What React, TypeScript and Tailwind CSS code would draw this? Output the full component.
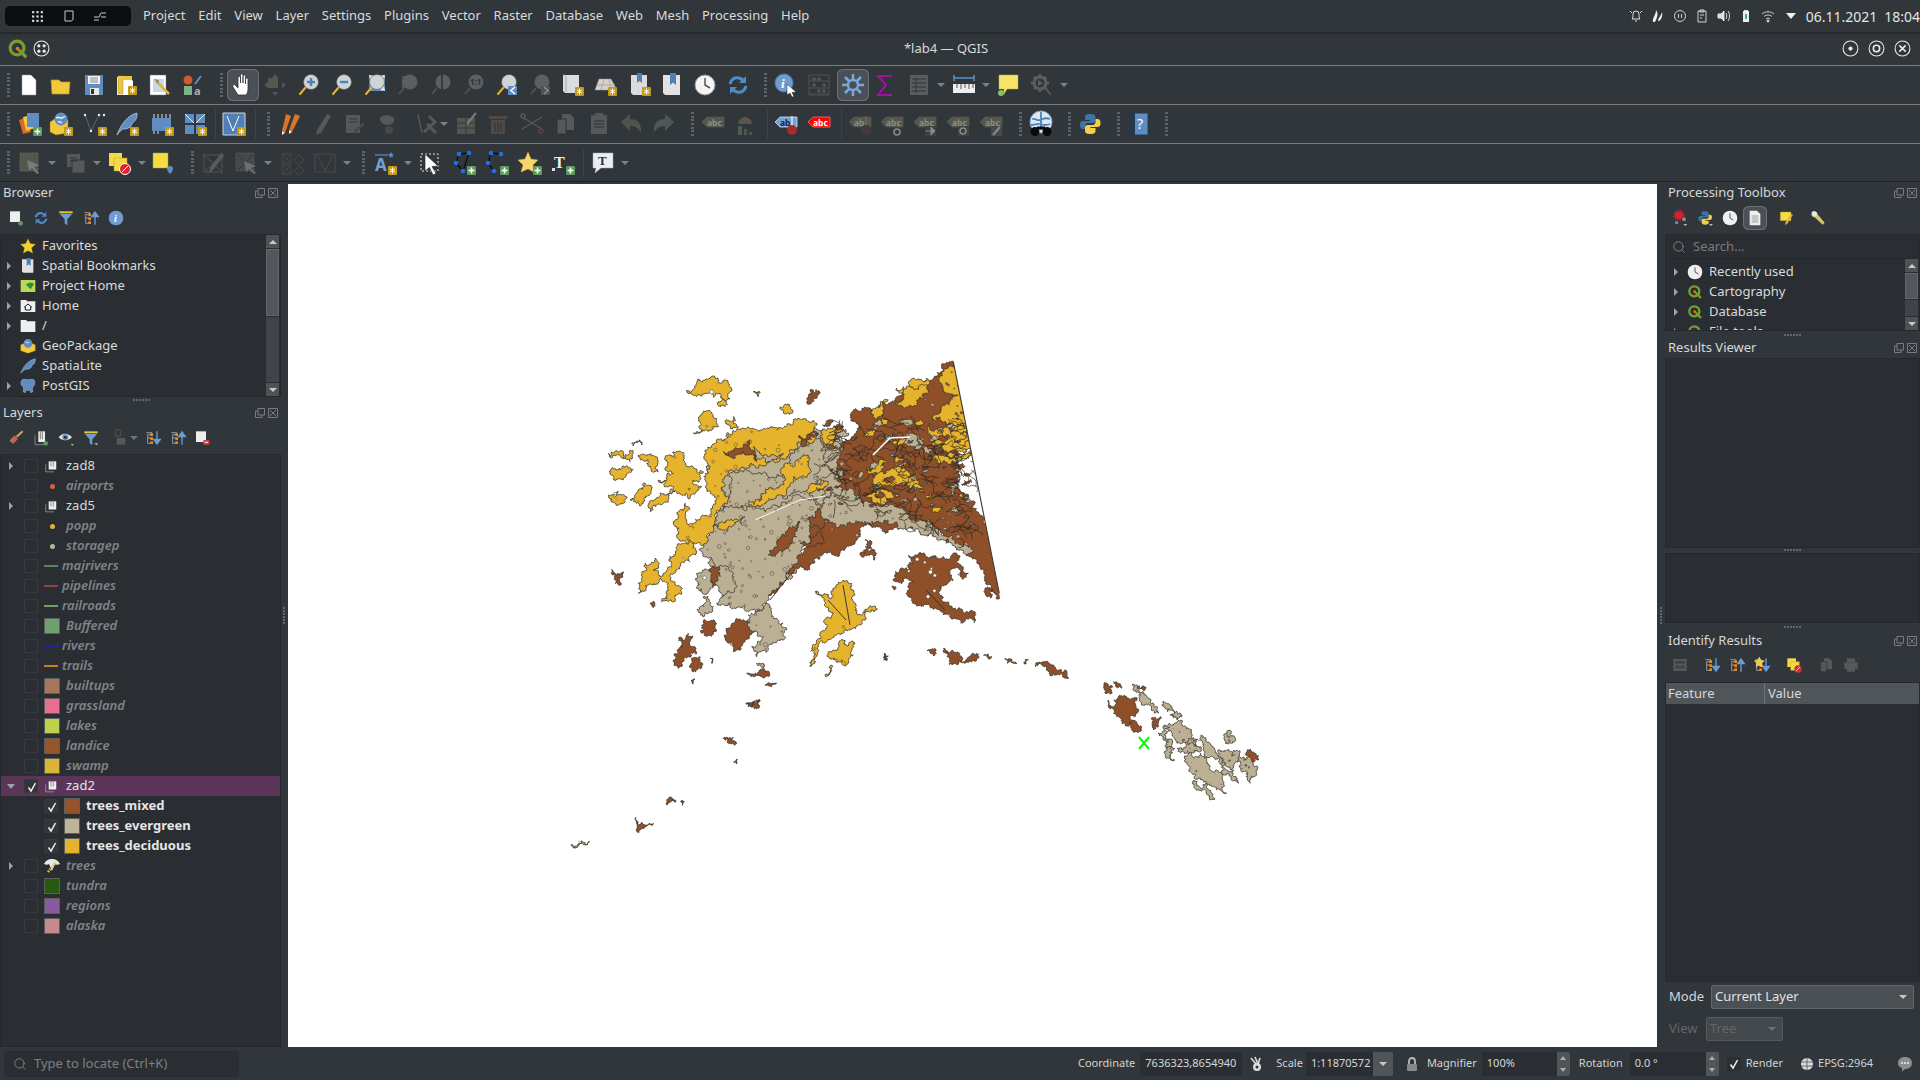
import type { ReactNode } from "react";
import { Search } from "lucide-react";

// ---- map drawing -------------------------------------------------------
type Pt = [number, number];
const BROWN = "#8f5029";
const TAN = "#bcb094";
const YEL = "#e6b32d";
const EDGE = "#3a362e";

let seed = 1234567;
const rnd = () => {
  seed = (seed + 0x6d2b79f5) | 0;
  let t = Math.imul(seed ^ (seed >>> 15), 1 | seed);
  t = (t + Math.imul(t ^ (t >>> 7), 61 | t)) ^ t;
  return ((t ^ (t >>> 14)) >>> 0) / 4294967296;
};

const z9 = (s: string): Pt[] =>
  s.split(" ").map((p) => {
    const [x, y] = p.split(",").map(Number);
    return [580 + x / 3, 340 + y / 3] as Pt;
  });
const z10 = (s: string): Pt[] =>
  s.split(" ").map((p) => {
    const [x, y] = p.split(",").map(Number);
    return [540 + x / 2.119, 620 + y / 3] as Pt;
  });

// jagged coast: split every edge until it is about a pixel and a half long
const splitEdge = (a: Pt, b: Pt, out: Pt[]) => {
  const dx = b[0] - a[0];
  const dy = b[1] - a[1];
  const len = Math.hypot(dx, dy);
  if (len < 1.6) {
    out.push(a);
    return;
  }
  const k = (rnd() - 0.5) * (len > 14 ? 0.26 : 0.85);
  const m: Pt = [(a[0] + b[0]) / 2 - dy * k, (a[1] + b[1]) / 2 + dx * k];
  splitEdge(a, m, out);
  splitEdge(m, b, out);
};
const rough = (pts: Pt[]) => {
  const out: Pt[] = [];
  pts.forEach((a, i) => splitEdge(a, pts[(i + 1) % pts.length], out));
  return out;
};
const toD = (pts: Pt[]) =>
  "M" + pts.map((p) => p[0].toFixed(1) + " " + p[1].toFixed(1)).join("L") + "Z";

const inside = (p: Pt, poly: Pt[]) => {
  let hit = false;
  for (let i = 0, j = poly.length - 1; i < poly.length; j = i++) {
    const [xi, yi] = poly[i];
    const [xj, yj] = poly[j];
    if (yi > p[1] !== yj > p[1] && p[0] < ((xj - xi) * (p[1] - yi)) / (yj - yi) + xi) hit = !hit;
  }
  return hit;
};

type Land = { c: string; p: Pt[]; holes?: number; hc?: string };
const mainland: Land[] = [
  { c: TAN, p: z9("385,400 430,300 700,260 810,320 810,500 700,560 640,700 520,800 420,780 370,625 430,500") },
  { c: BROWN, holes: 170, hc: TAN, p: z9("1120,65 1150,60 1320,800 1262,775 1235,740 1200,670 1150,620 1090,590 1040,570 960,565 900,560 860,555 830,600 780,640 740,640 700,670 640,700 600,740 560,775 560,720 620,700 680,620 700,540 740,500 720,470 690,410 690,370 730,340 790,330 810,300 835,250 810,225 860,205 890,210 950,170 1000,130 1060,115") },
  { c: BROWN, holes: 26, hc: "#ffffff", p: z9("985,645 1040,650 1090,650 1125,640 1150,680 1165,700 1145,710 1110,690 1120,720 1080,740 1090,790 1130,810 1185,820 1182,848 1130,838 1090,825 1050,800 1000,790 985,770 1000,725 970,725 940,722 945,695 985,695 1000,670") },
  { c: TAN, holes: 90, hc: TAN, p: z9("420,520 450,400 500,390 560,400 620,420 640,340 700,290 740,310 790,320 770,400 790,470 730,490 640,460 500,500") },
  { c: TAN, holes: 60, hc: TAN, p: z9("730,480 800,450 850,490 950,500 1000,540 1100,590 1180,630 1170,640 1090,600 1000,570 930,555 850,550 800,560 760,550 700,540") },
  { c: TAN, holes: 150, hc: TAN, p: z9("360,625 390,570 430,510 500,510 640,465 690,480 725,500 690,560 685,610 630,690 600,725 565,770 545,810 505,815 450,790 410,790 470,740 430,680 370,650") },
  { c: BROWN, p: z9("590,610 640,560 660,545 650,590 610,630 565,645") },
  { c: BROWN, p: z9("690,530 720,510 745,540 720,570 690,560") },
  { c: BROWN, p: z9("660,610 690,590 730,595 680,620") },
  { c: YEL, holes: 90, hc: YEL, p: z9("375,330 410,300 440,280 500,265 560,265 640,245 700,240 700,270 690,310 650,310 620,350 560,370 500,385 450,390 430,440 445,480 420,510 400,560 350,610 290,590 295,530 315,490 320,540 340,550 385,530 410,480 380,450 385,400") },
  { c: YEL, holes: 12, hc: YEL, p: z9("505,490 600,440 625,370 690,355 690,400 640,410 620,460 540,500") },
  { c: YEL, p: z9("400,560 440,540 495,530 440,575") },
  { c: YEL, p: z9("680,450 730,420 745,430 700,455") },
  { c: TAN, p: z9("520,320 560,345 610,340 590,360 530,365") },
  { c: BROWN, p: z9("430,335 480,325 510,300 530,360 500,345 460,355") },
  { c: BROWN, p: z9("655,290 680,285 695,300 670,320") },
  { c: YEL, holes: 4, hc: "#fff", p: z9("320,150 375,120 405,110 450,140 450,175 420,160 380,160 340,165") },
  { c: YEL, p: z9("415,185 440,185 435,200 420,200") },
  { c: YEL, holes: 4, hc: YEL, p: z9("340,280 375,215 410,235 415,260 380,270") },
  { c: YEL, p: z9("435,245 460,230 475,260 450,265") },
  { c: YEL, p: z9("600,200 630,200 635,220 610,215") },
  { c: YEL, p: z9("520,155 540,155 535,170") },
  { c: BROWN, p: z9("680,185 690,150 715,165 700,185") },
  { c: YEL, p: z9("85,340 140,345 150,330 160,340 150,365 130,345 90,350") },
  { c: YEL, p: z9("155,310 180,300 185,315 160,318") },
  { c: YEL, p: z9("175,345 225,350 235,395 215,395 205,360 180,355") },
  { c: YEL, p: z9("90,400 160,390 130,420 100,415") },
  { c: YEL, holes: 6, hc: YEL, p: z9("255,360 295,335 310,360 320,380 370,395 340,420 365,440 330,475 300,460 260,440 235,420 280,400 255,385") },
  { c: YEL, holes: 5, hc: "#fff", p: z9("150,480 190,430 215,440 190,490") },
  { c: YEL, holes: 4, hc: "#fff", p: z9("85,465 115,455 140,475 105,490") },
  { c: YEL, p: z9("205,500 240,460 285,455 250,490 210,515") },
  { c: YEL, holes: 8, hc: "#fff", p: z9("175,730 195,670 225,655 220,690 245,710 275,680 290,620 330,600 350,640 300,680 270,720 300,740 280,785 245,785 265,730 240,715 190,755 175,760") },
  { c: BROWN, p: z9("95,688 130,695 120,735 105,730") },
  { c: BROWN, p: z9("210,790 225,790 222,800") },
  { c: TAN, holes: 5, hc: "#fff", p: z9("350,700 390,685 420,700 390,745 350,745") },
  { c: BROWN, p: z9("385,690 420,690 400,740") },
  { c: TAN, p: z9("360,800 370,770 400,800 370,830") },
  { c: BROWN, holes: 6, hc: TAN, p: z9("440,880 470,835 510,850 525,870 490,910 460,935 445,910") },
  { c: TAN, holes: 16, hc: TAN, p: z9("505,825 560,790 590,835 620,870 610,900 565,925 530,950 515,920 550,890 510,870") },
  { c: BROWN, p: z9("280,960 300,890 325,880 345,920 325,950 295,985") },
  { c: BROWN, p: z9("335,960 360,950 355,985 335,990") },
  { c: BROWN, p: z9("365,855 405,845 410,870 380,890") },
  { c: BROWN, p: z9("500,1000 550,990 565,1010 520,1010") },
  { c: BROWN, p: z9("555,1035 590,1030 575,1040") },
  { c: BROWN, p: z9("500,1090 540,1080 520,1100") },
  { c: BROWN, p: z9("335,1020 345,1018 340,1032") },
  { c: BROWN, p: z9("390,955 398,955 395,970") },
  { c: TAN, p: z9("530,970 555,975 550,990") },
  { c: YEL, holes: 12, hc: YEL, p: z9("705,755 760,770 790,720 815,730 825,810 890,810 830,860 790,880 740,905 715,935 690,980 710,900 720,880 735,850 745,810") },
  { c: YEL, holes: 16, hc: YEL, p: z9("750,935 790,900 825,910 800,975 765,960") },
  { c: YEL, p: z9("735,1005 755,975 750,995 740,1010") },
  { c: BROWN, p: z9("915,940 920,960 912,955") },
  { c: BROWN, p: z9("840,640 860,625 890,640 885,660 865,645 845,650") },
  { c: BROWN, p: z9("855,600 870,600 875,625 855,620") },
  { c: BROWN, p: z9("1215,745 1240,750 1235,772 1220,770") },
  { c: BROWN, p: z9("935,740 945,740 942,750") },
  { c: YEL, p: z9("950,145 970,140 965,160") },
  { c: YEL, holes: 6, hc: BROWN, p: z9("945,190 1000,140 1040,120 1050,160 1010,190 970,205") },
  { c: YEL, holes: 24, hc: BROWN, p: z9("1070,110 1120,80 1160,80 1200,260 1130,260 1060,240 1100,190 1135,165 1090,150") },
  { c: YEL, holes: 8, hc: BROWN, p: z9("1050,250 1130,260 1180,260 1190,340 1120,350 1060,320") },
  { c: YEL, p: z9("880,205 925,180 900,230 880,235") },
  { c: YEL, holes: 6, hc: YEL, p: z9("885,410 930,390 990,400 1030,440 1030,460 980,430 885,435") },
  { c: YEL, p: z9("860,390 920,365 880,410") },
  { c: YEL, p: z9("1060,340 1100,350 1190,330 1130,370 1080,370") },
  { c: YEL, p: z9("860,470 920,450 960,470 880,490") },
  { c: YEL, p: z9("985,130 1040,115 1050,130 1000,145") },
  { c: YEL, p: z9("760,260 790,270 760,310 730,310 720,290") },
  { c: YEL, p: z9("1110,280 1160,270 1185,300 1120,310") },
  { c: TAN, p: z9("920,300 1000,280 1030,330 960,320") },
  { c: TAN, p: z9("1010,300 1060,330 1050,350") },
  { c: TAN, p: z9("1100,430 1130,430 1120,470") },
];

// small mixed patches in the busy north eastern part
for (let i = 0; i < 150; i++) {
  const x = 700 + rnd() * 480;
  const y = 240 + rnd() * 340;
  if (y > 480 + (x - 700) * 0.25 || x > 1110 + (y - 65) * 0.19) continue;
  const north = x > 1000 && y < 380;
  const v = rnd();
  const c = north
    ? v < 0.3 ? YEL : v < 0.65 ? BROWN : v < 0.9 ? TAN : "#ffffff"
    : v < 0.45 ? BROWN : v < 0.75 ? TAN : v < 0.9 ? YEL : "#ffffff";
  const r = c === "#ffffff" ? 3 + rnd() * 5 : 5 + rnd() * 15;
  const a = -0.5 + rnd() * 0.6;
  const ca = Math.cos(a);
  const sa = Math.sin(a);
  const w = r * 0.45;
  const pts = [[-r, 0], [-r * 0.2, -w], [r, -w * 0.3], [r * 0.3, w], [-r * 0.5, w * 0.8]];
  mainland.push({
    c,
    p: pts.map(([px, py]) => [580 + (x + px * ca - py * sa) / 3, 340 + (y + px * sa + py * ca) / 3] as Pt),
  });
}

const islands: Land[] = [
  ...["1195,200 1210,195 1213,218 1200,222", "1205,240 1215,260 1210,265", "1215,280 1225,230 1255,235 1265,280 1250,290 1275,320 1270,335 1250,305 1225,290", "1295,295 1315,290 1310,315 1300,330", "1215,185 1225,190 1232,205 1220,200", "1265,198 1280,198 1282,210 1270,208", "820,92 840,100 835,108", "855,85 865,95 858,98", "862,110 885,95 890,125 905,115 925,100 930,110 900,130 885,135", "940,106 958,110 950,116", "985,115 1000,120 1010,132 990,130", "1025,128 1035,120 1030,132", "1050,140 1065,125 1100,150 1120,175 1095,165", "388,355 400,355 415,365 412,375 400,370", "410,425 418,418 416,432", "270,555 278,532 288,545 275,548", "298,545 306,545 302,556", "203,592 208,615 240,610 210,637 205,625", "436,250 465,238 450,260", "730,100 735,122 728,120"].map((s) => ({ c: BROWN, p: z10(s) })),
  ...["1255,195 1270,215 1290,235 1310,280 1295,270 1270,240", "1320,245 1335,255 1345,280 1330,275", "1335,285 1360,285 1350,300", "1320,320 1350,305 1380,340 1385,370 1350,370 1340,340", "1310,340 1330,335 1340,370 1325,380", "1350,385 1390,375 1400,395 1370,400", "1372,405 1400,400 1420,440 1445,470 1455,520 1430,500 1400,480 1375,450", "1385,480 1410,490 1430,535 1395,510", "1375,355 1395,360 1390,380 1375,375", "1400,345 1420,370 1435,400 1455,450 1475,470 1480,490 1450,465 1425,410 1405,380", "1440,390 1470,390 1480,420 1465,450 1445,430", "1482,410 1510,405 1520,450 1505,490 1485,450", "1455,335 1465,335 1465,370 1452,370", "1330,380 1345,385 1345,420 1335,415", "67,672 88,662 105,665 100,675 80,675 72,685"].map((s) => ({ c: TAN, holes: 10, hc: "#6a6452", p: z10(s) })),
  { c: BROWN, p: z10("1505,388 1522,420 1512,425") },
];

const landPaths = (list: Land[]) =>
  list.map((l) => {
    const d = toD(rough(l.p));
    const xs = l.p.map((p) => p[0]);
    const ys = l.p.map((p) => p[1]);
    const holes: { x: number; y: number; r: number }[] = [];
    for (let i = 0; i < (l.holes ?? 0); i++) {
      const pt: Pt = [
        Math.min(...xs) + rnd() * (Math.max(...xs) - Math.min(...xs)),
        Math.min(...ys) + rnd() * (Math.max(...ys) - Math.min(...ys)),
      ];
      if (inside(pt, l.p)) holes.push({ x: pt[0], y: pt[1], r: 0.5 + rnd() * rnd() * 1.8 });
    }
    return { d, c: l.c, hc: l.hc, holes };
  });

const mainPaths = landPaths(mainland);
const islandPaths = landPaths(islands);

// dark stream network over the north east of the mainland
const streams: string[] = [];
for (let i = 0; i < 190; i++) {
  let x = 700 + rnd() * 480;
  let y = 230 + rnd() * 370;
  if (y > 470 + (x - 700) * 0.3 || x > 1120 + (y - 65) * 0.19) continue;
  let a = 0.1 + rnd() * 0.5;
  let d = `M${(580 + x / 3).toFixed(1)} ${(340 + y / 3).toFixed(1)}`;
  for (let k = 0; k < 8; k++) {
    a += (rnd() - 0.5) * 1.5;
    x += Math.cos(a) * 7;
    y += Math.sin(a) * 7;
    d += `L${(580 + x / 3).toFixed(1)} ${(340 + y / 3).toFixed(1)}`;
  }
  streams.push(d);
}

const MapDrawing = () => (
  <svg viewBox="288 184 1369 863" className="block h-full w-full">
    <defs>
      <clipPath id="wedge">
        <polygon points="288,184 918,184 1089,1047 288,1047" />
      </clipPath>
    </defs>
    <g clipPath="url(#wedge)" strokeLinejoin="round">
      {mainPaths.map((m, i) => (
        <g key={i}>
          <path d={m.d} fill={m.c} stroke={EDGE} strokeWidth="0.8" />
          {m.holes.map((h, j) => (
            <circle key={j} cx={h.x} cy={h.y} r={h.r} fill={m.hc} stroke="#4d493e" strokeWidth="0.5" />
          ))}
        </g>
      ))}
      {streams.map((d, i) => (
        <path key={i} d={d} fill="none" stroke="#2e2a24" strokeWidth="0.7" />
      ))}
      <path d="M873 455L890 438L910 437" fill="none" stroke="#fff" strokeWidth="1.6" />
      <path d="M755 520L800 500L826 496" fill="none" stroke="#fff" strokeWidth="0.9" />
      <path d="M843 585L850 625M828 600L846 620" fill="none" stroke="#2e2a24" strokeWidth="0.9" />
      <path d="M926 590L945 610M790 575L770 600" fill="none" stroke="#2e2a24" strokeWidth="0.9" />
    </g>
    <path d="M953.300 361.700L999.300 593.300" fill="none" stroke={EDGE} strokeWidth="1.100" />
    <g strokeLinejoin="round">
      {islandPaths.map((m, i) => (
        <g key={i}>
          <path d={m.d} fill={m.c} stroke={EDGE} strokeWidth="0.8" />
          {m.holes.map((h, j) => (
            <circle key={j} cx={h.x} cy={h.y} r={h.r * 0.7} fill={m.hc} />
          ))}
        </g>
      ))}
    </g>
    <path d="M1139 737L1149 749M1149 737L1139 749" stroke="#00ff00" strokeWidth="2" />
  </svg>
);

// ---- icons -------------------------------------------------------------
const Gold = ({ x = 15, y = 15 }: { x?: number; y?: number }) => (
  <g>
    <rect x={x} y={y} width="9" height="9" rx="1" fill="#c59a12" />
    <path d={`M${x + 4.5} ${y + 1.5}v6M${x + 2} ${y + 3}l5 3M${x + 7} ${y + 3}l-5 3`} stroke="#fff" strokeWidth="1" />
  </g>
);
const Plus = ({ x = 15, y = 15 }: { x?: number; y?: number }) => (
  <g>
    <rect x={x} y={y} width="9" height="9" rx="1" fill="#5d9a5d" />
    <path d={`M${x + 4.5} ${y + 1.5}v6M${x + 1.5} ${y + 4.5}h6`} stroke="#fff" strokeWidth="1.6" />
  </g>
);
const Mag = ({ f = "#cfd3d6", h = "#e8b52d", children }: { f?: string; h?: string; children?: ReactNode }) => (
  <g>
    <path d="M9 14L3 21" stroke={h} strokeWidth="2" strokeLinecap="round" />
    <circle cx="14" cy="9" r="7.5" fill={f} stroke="#555" strokeWidth=".6" />
    {children}
  </g>
);
const DMag = ({ children }: { children?: ReactNode }) => (
  <g>
    <path d="M8 15L3 21" stroke="#4b4f52" strokeWidth="2" />
    <circle cx="14" cy="9" r="7.5" fill="#5b5f5f" />
    {children}
  </g>
);
const Page = ({ f = "#fff" }: { f?: string }) => <path d="M5 2h9l5 5v15H5z" fill={f} stroke="#9a9a9a" strokeWidth=".5" />;
const Tag = ({ f = "#55574f", t = "abc", c = "#8c8c80", s = "#55574f" }: { f?: string; t?: string; c?: string; s?: string }) => (
  <g>
    <path d="M1 10l5-5h17v10H6z" fill={f} stroke={s} strokeWidth=".8" />
    <text x="6" y="13.5" fontSize="8.5" fontWeight="700" fontFamily="Noto Sans" fill={c}>{t}</text>
  </g>
);
const Expand = ({ up }: { up?: boolean }) => (
  <g>
    <path d="M2 4h8v3h-6v13h6M4 12h6" fill="none" stroke="#c8c8c8" strokeWidth="1" />
    <rect x="8" y="5" width="4" height="4" fill="#ee8a1c" />
    <rect x="8" y="11" width="4" height="4" fill="#ee8a1c" />
    <rect x="8" y="17" width="4" height="4" fill="#ee8a1c" />
    <path d={up ? "M18 22V6M13 10l5-7 5 7z" : "M18 2v16M13 14l5 7 5-7z"} fill="#6d9bd1" stroke="#6d9bd1" strokeWidth="2" />
  </g>
);
const Python = (
  <g>
    <path d="M12 2c-5 0-5 2-5 3.5V8h5v1H5c-2 0-3 1.500-3 4s1 4 3 4h2v-3c0-1.500 1-3 3-3h5c1.500 0 2.500-1 2.500-2.500v-3C17.500 3 16 2 12 2z" fill="#3d74a8" />
    <path d="M12.500 22c5 0 5-2 5-3.500V16h-5v-1h7c2 0 3-1.500 3-4s-1-4-3-4h-2v3c0 1.500-1 3-3 3h-5C8 13 7 14 7 15.500v3C7 21 8.500 22 12.500 22z" fill="#f5cf48" />
  </g>
);
const QLogo = (
  <g>
    <circle cx="11" cy="11" r="7.5" fill="none" stroke="#75a02c" strokeWidth="3.5" />
    <path d="M13 13l8 8" stroke="#75a02c" strokeWidth="3.5" />
    <circle cx="11.500" cy="11.500" r="2" fill="#ee7913" />
  </g>
);
const DisBox = (
  <g fill="none" stroke="#45494c" strokeWidth="1.4">
    <path d="M3 4h18v17H3zM3 4l18 17M21 4L3 21" />
    <circle cx="3" cy="4" r="1" /><circle cx="21" cy="4" r="1" />
  </g>
);

const ic: Record<string, ReactNode> = {
  new: <Page />,
  open: <path d="M2 7h8l2 2h9l-1 12H3z" fill="#f0c93c" stroke="#b8952b" strokeWidth=".7" />,
  save: (
    <g>
      <path d="M3 2h18v20H3z" fill="#5f8dc1" />
      <path d="M6 3h12v8H6z" fill="#f4f4f4" />
      <path d="M8 5h8M8 7h8M8 9h8" stroke="#8a8a8a" />
      <path d="M8 15h9v7H8z" fill="#e8e8e8" />
      <path d="M9 16h3v5H9z" fill="#333" />
    </g>
  ),
  layout: (
    <g>
      <path d="M2 4h12l4 4v14H2z" fill="#fff" />
      <path d="M3 3h5v18H3z" fill="#e8c645" stroke="#a8902a" strokeWidth=".5" />
      <path d="M3 3h14v4H3z" fill="#e8c645" />
      <Gold x={13} y={13} />
    </g>
  ),
  layoutMgr: (
    <g>
      <path d="M2 2h16v20H2z" fill="#fff" stroke="#777" strokeWidth=".5" />
      <path d="M5 6h11v13H5z" fill="#c9d8ea" />
      <path d="M8 8l13 13" stroke="#d9b43e" strokeWidth="2.500" />
      <path d="M6 6l5 1-1 4z" fill="#888" />
    </g>
  ),
  style: (
    <g>
      <circle cx="7" cy="7" r="4.500" fill="#d05a30" />
      <path d="M14 11l6-8" stroke="#5d93cb" strokeWidth="1.800" />
      <rect x="3" y="13" width="8" height="9" fill="#7eb38a" />
      <text x="13" y="22" fontSize="11" fontWeight="700" fontFamily="Noto Sans" fill="#b0b0b0">a</text>
    </g>
  ),
  hand: (
    <g fill="#fff" stroke="#333" strokeWidth=".8" strokeLinejoin="round">
      <path d="M7 22l-5-8c-1-2 1-3 2-2l3 3V5c0-2 2.500-2 2.500 0v5V2.500c0-2 2.500-2 2.500 0V10V3.500c0-2 2.500-2 2.500 0V11V6.500c0-2 2.500-2 2.500 0V16c0 3-1 5-2 6H9z" />
    </g>
  ),
  panSel: (
    <g fill="#55584f">
      <path d="M5 5h10v10H5z" />
      <path d="M12 1l3 4H9zM12 23l3-4H9zM1 12l4-3v6zM23 12l-4-3v6z" fill="#53575a" />
    </g>
  ),
  zoomIn: <Mag><path d="M10 9h8M14 5v8" stroke="#4b83bd" strokeWidth="2.400" /></Mag>,
  zoomOut: <Mag><path d="M10 9h8" stroke="#4b83bd" strokeWidth="2.400" /></Mag>,
  fullExt: (
    <g>
      <path d="M6 2h16v16H6z" fill="#5f8dc1" />
      <path d="M6 2l5 1-4 4zM22 2l-5 1 4 4zM22 18l-5-1 4-4z" fill="#dfe8f1" />
      <Mag />
    </g>
  ),
  zoomSel: <g><path d="M6 3h12v12H6z" fill="#53555a" /><DMag /></g>,
  zoomLayer: <g><DMag /><path d="M13 1v16" stroke="#2e3236" strokeWidth="1.500" /></g>,
  zoomNat: <g><DMag /><text x="8" y="12" fontSize="8" fontWeight="700" fontFamily="Noto Sans" fill="#2e3236">1:1</text></g>,
  zoomLast: <g><Mag /><path d="M13 13h9v9h-9z" fill="#5f8dc1" /><path d="M20 14l-4 3.500 4 3.500" stroke="#fff" fill="none" strokeWidth="1.500" /></g>,
  zoomNext: <g><DMag /><path d="M13 13h9v9h-9z" fill="#4f5356" /><path d="M16 14l4 3.500-4 3.500" stroke="#8b8f92" fill="none" strokeWidth="1.500" /></g>,
  mapView: <g><path d="M2 2h16v18H4l-2-2z" fill="#dcdcdc" /><path d="M2 2c2 0 3 1 3 3v14" stroke="#aaa" fill="none" /><Gold x={14} y={14} /></g>,
  map3d: <g><path d="M5 6h12l6 11H1z" fill="#d5d3cc" stroke="#999" strokeWidth=".5" /><path d="M3 12h18M10 6l-3 11M15 6l2 11" stroke="#aaa" /><Gold x={14} y={14} /></g>,
  bmNew: <g><path d="M3 2h16v20H5l-2-2z" fill="#dcdcdc" /><path d="M9 0h5v10l-2.500-2-2.500 2z" fill="#4f7fb3" /><Gold x={14} y={14} /></g>,
  bookmarks: <g><path d="M3 2h17v20H5l-2-2z" fill="#e2e2e2" /><path d="M10 0h6v12l-3-2.500-3 2.500z" fill="#4f7fb3" /></g>,
  clock: <g><circle cx="12" cy="12" r="10" fill="#f4f4f4" stroke="#999" /><path d="M12 5v7l5 3" stroke="#555" strokeWidth="1.500" fill="none" /></g>,
  refresh: (
    <g fill="none" stroke="#4c8cc9" strokeWidth="3.200">
      <path d="M4 11c1-5 5-7 9-6 2 .5 3.500 1.500 4.500 3" />
      <path d="M20 13c-1 5-5 7-9 6-2-.5-3.500-1.500-4.500-3" />
      <path d="M20 3v7h-7zM4 21v-7h7z" fill="#4c8cc9" stroke="none" />
    </g>
  ),
  identify: (
    <g>
      <circle cx="10" cy="10" r="9" fill="#6f9dd0" stroke="#4f7aa9" />
      <text x="7" y="15" fontSize="13" fontWeight="700" fontStyle="italic" fontFamily="Liberation Serif" fill="#fff">i</text>
      <path d="M13 11l9 8-4 .5 2 4-2 .5-2-4-3 2z" fill="#fff" stroke="#222" strokeWidth=".5" />
    </g>
  ),
  attr: (
    <g stroke="#4f5356" fill="#4f5356">
      <path d="M2 2h20v20H2z" fill="none" />
      <path d="M2 8h20M2 15h20M2 21h20" fill="none" />
      <circle cx="7" cy="6" r="1.500" /><circle cx="12" cy="6" r="1.500" /><circle cx="17" cy="12" r="1.500" /><circle cx="7" cy="12" r="1.500" /><circle cx="12" cy="18" r="1.500" /><circle cx="17" cy="18" r="1.500" />
    </g>
  ),
  gear: (
    <g stroke="#79a8dc" fill="none">
      <circle cx="12" cy="12" r="5" strokeWidth="2.400" />
      <path d="M12 1v6M12 17v6M1 12h6M17 12h6M4 4l4 4M16 16l4 4M20 4l-4 4M8 16l-4 4" strokeWidth="2.600" />
    </g>
  ),
  sigma: <path d="M19 3H5l8 9-8 10h14" fill="none" stroke="#a5119f" strokeWidth="2" />,
  table: <g><path d="M3 2h18v20H3z" fill="#595c5f" /><path d="M5 6h14M5 10h14M5 14h14M5 18h14M9 5v15" stroke="#303438" /></g>,
  ruler: <g><path d="M2 5h20M2 2v6M22 2v6" stroke="#5d90c7" strokeWidth="1.500" /><path d="M1 11h22v9H1z" fill="#eeeeee" /><path d="M5 11v4M9 11v5M13 11v4M17 11v5M21 11v4" stroke="#555" /></g>,
  tip: <g><path d="M3 2h19v14H11l-3 5v-5H3z" fill="#f6e36a" stroke="#c3ae36" strokeWidth=".5" /><circle cx="5" cy="20" r="3" fill="#7ec46e" /></g>,
  model: <g fill="none" stroke="#5a5e61"><circle cx="10" cy="10" r="6" strokeWidth="3" /><path d="M10 1v4M10 15v4M1 10h4M15 10h4M4 4l2 2M14 14l2 2M16 4l-2 2M6 14l-2 2" strokeWidth="2.500" /><path d="M14 13l7 9" strokeWidth="1.500" /><path d="M8 7l5 3-5 3z" fill="#5a5e61" stroke="none" /></g>,
  dsm: (
    <g>
      <path d="M1 8l8-3 4 15-8 2z" fill="#d96a2b" />
      <path d="M5 5l9-2 3 13-9 3z" fill="#f0c93c" />
      <path d="M9 1h12v14H9z" fill="#5f8dc1" />
      <Plus />
    </g>
  ),
  gpkg: (
    <g>
      <path d="M1 10l6-4 12 2v13l-12 2-6-3z" fill="#f0c93c" stroke="#8a7020" strokeWidth=".5" />
      <circle cx="12" cy="7" r="6.500" fill="#5f8dc1" />
      <path d="M7 6c3-2 4 1 6 0s2-2 3-1M9 10c2-1 3 0 4 1" stroke="#e4ecf5" fill="none" strokeWidth="1.500" />
      <Gold />
    </g>
  ),
  dots: (
    <g>
      <path d="M2 3l6 16M16 3l-8 16" stroke="#5f8dc1" strokeWidth=".6" />
      <circle cx="2" cy="3" r="1.200" fill="#eee" /><circle cx="16" cy="3" r="1.200" fill="#eee" /><circle cx="8" cy="19" r="1.200" fill="#eee" /><circle cx="21" cy="3" r="1.200" fill="#eee" />
      <Gold />
    </g>
  ),
  feather: (
    <g>
      <path d="M2 23C6 12 13 3 22 1c0 5-1 8-5 10 0 3-3 6-8 6-2 0-4 2-7 6z" fill="#5f8dc1" stroke="#dfe8f1" strokeWidth=".6" />
      <Gold />
    </g>
  ),
  chip: (
    <g>
      <path d="M2 6h19v13H2z" fill="#5f8dc1" />
      <path d="M4 2v4M8 2v4M12 2v4M16 2v4M20 2v4M4 19v3M8 19v3" stroke="#e0e0e0" />
      <Gold />
    </g>
  ),
  grid: (
    <g>
      <path d="M2 2h9v9H2zM13 2h9v9h-9zM2 13h9v9H2zM13 13h9v9h-9z" fill="#5f8dc1" />
      <path d="M2 2l9 9M13 11l9-9" stroke="#eee" />
      <Gold />
    </g>
  ),
  virtual: (
    <g>
      <path d="M1 1h22v22H1z" fill="#4f7fb3" stroke="#cfd8e2" />
      <path d="M5 4l6 15 6-15" stroke="#fff" fill="none" />
      <Gold />
    </g>
  ),
  pencils: (
    <g>
      <path d="M7 2l5 2-6 17-3-2z" fill="#d9742b" />
      <path d="M16 2l5 2-8 16-3-2z" fill="#d9742b" />
      <path d="M3 19l3 2-3 2zM10 18l3 2-3 2z" fill="#eee" />
    </g>
  ),
  dPencil: <path d="M17 2l4 2-10 17-5 2 1-5z" fill="#55585a" />,
  dSave: <g><path d="M3 3h14v18H3z" fill="#55585a" /><path d="M6 7h8M6 10h8" stroke="#35393c" /><path d="M22 12l-9 9-3 1 1-3 9-9z" fill="#45494c" /></g>,
  dPoly: <g><path d="M3 6c4-4 10-3 14 0 2 3-2 7-6 7-3 0-8-1-8-7z" fill="#55585a" /><circle cx="12" cy="18" r="4" fill="#45494c" /></g>,
  dVertex: <g fill="none" stroke="#55585a" strokeWidth="1.500"><path d="M3 3l4 18M3 3h1" /><path d="M9 20l11-10M12 12l9 9M14 4l7 7" strokeWidth="3" /></g>,
  dEdit: <g><path d="M3 6h18v16H3z" fill="#55574f" /><path d="M3 11h18M3 16h18M12 6v16" stroke="#35393c" /><path d="M22 1l-9 11" stroke="#7d7d75" strokeWidth="2" /></g>,
  dTrash: <g fill="#4f4a48"><path d="M3 4h18v3H3z" /><path d="M5 8h14v14H5z" /><path d="M9 10v10M12 10v10M15 10v10" stroke="#2f3338" /></g>,
  dCut: <g fill="none" stroke="#56595b" strokeWidth="1.400"><path d="M2 5l20 12M2 17L22 5" /><circle cx="3" cy="4" r="2" /><circle cx="21" cy="19" r="2" stroke="#5a4545" /></g>,
  dCopy: <g fill="#55585a"><path d="M9 2h8l4 4v12H9z" /><path d="M4 7h9v15H4z" stroke="#2f3338" /></g>,
  dPaste: <g fill="#55585a"><path d="M4 3h16v19H4z" /><path d="M8 1h8v4H8z" /><path d="M7 9h10M7 12h10M7 15h10" stroke="#2f3338" /></g>,
  undo: <path d="M2 10l9-8v5c7 0 12 4 11 14-2-4-5-7-11-7v5z" fill="#50544f" />,
  redo: <path d="M22 10l-9-8v5C6 7 1 11 2 21c2-4 5-7 11-7v5z" fill="#4e5856" />,
  abc: <Tag />,
  pie: <g><path d="M5 12a7 7 0 1 1 14 0z" fill="#56584f" /><path d="M12 5v7l6-3" fill="#6a4f4a" /><rect x="5" y="14" width="4" height="9" fill="#4e5e4e" /><rect x="11" y="17" width="3" height="6" fill="#50544f" /><rect x="16" y="20" width="3" height="3" fill="#50544f" /></g>,
  abBlue: <g><Tag f="#6fa4df" t="ab" c="#222" s="#cfe1f5" /><path d="M18 4v11" stroke="#ddd" strokeWidth="1.600" /><circle cx="18" cy="18" r="5" fill="#a82b2b" /></g>,
  abcRed: <Tag f="#f00" t="abc" c="#fff" s="#ff6f6f" />,
  abPin: <g><Tag t="ab" /><path d="M18 4v11" stroke="#66696a" strokeWidth="1.500" /><circle cx="18" cy="18" r="5" fill="#443a3a" /></g>,
  abRot: <g><Tag /><circle cx="17" cy="20" r="3" fill="none" stroke="#8a8a80" strokeWidth="1.600" /></g>,
  abMove: <g><Tag /><rect x="12" y="14" width="11" height="10" fill="#3d4144" /><path d="M13 19h5M18 15l4 4-4 4z" fill="#8a8a80" stroke="#8a8a80" /></g>,
  abTurn: <g><Tag /><rect x="12" y="14" width="11" height="10" fill="#3d4144" /><circle cx="17" cy="19" r="3" fill="none" stroke="#8a8a80" strokeWidth="1.500" /></g>,
  abEdit: <g><Tag /><rect x="12" y="14" width="11" height="10" fill="#45494c" /><path d="M21 15l-7 8" stroke="#8a8a80" strokeWidth="2" /></g>,
  globe: (
    <g>
      <circle cx="12" cy="10" r="11" fill="#dde8f3" stroke="#7ea4cc" />
      <path d="M3 7c4-1 5 2 8 1s5-3 10-1M2 13c4 0 6-2 9-1s5 2 10 0M12 0v18" stroke="#4d83bd" fill="none" strokeWidth="1.800" />
      <circle cx="6" cy="19.500" r="4.500" fill="#0a0a0a" /><circle cx="18" cy="19.500" r="4.500" fill="#0a0a0a" />
      <path d="M8 16h8" stroke="#0a0a0a" strokeWidth="3" />
    </g>
  ),
  python: Python,
  help: <g><path d="M3 1h18v22H3z" fill="#5f8dc1" stroke="#253a55" /><path d="M3 1h5v22H3z" fill="#223750" /><text x="10" y="17" fontSize="14" fontFamily="Noto Sans" fill="#fff">?</text></g>,
  selDis: <g><path d="M2 2h18v18H2z" fill="#55574f" stroke="#62645c" strokeDasharray="2 1" /><path d="M9 9l12 5-5 2 5 6-2 1-5-6-3 3z" fill="#797b78" /></g>,
  selTab: <g fill="#55585a"><path d="M3 3h13v13H3z" /><path d="M8 9h13v13H8z" stroke="#31363b" /><path d="M6 7h7M6 10h7" stroke="#2f3338" /></g>,
  deselect: <g><path d="M2 2h13v13H2z" fill="#f2d945" /><path d="M7 7h13v13H7z" fill="#f2d945" stroke="#b8a02b" strokeWidth=".5" /><circle cx="18" cy="18" r="5.500" fill="#e0242e" stroke="#fff" /><path d="M15 21l6-6" stroke="#fff" /></g>,
  selLoc: <g><path d="M2 2h15v15H2z" fill="#f5dc45" stroke="#b8a02b" strokeWidth=".5" /><path d="M19 15a3 3 0 0 1 3 3c0 2-3 5-3 5s-3-3-3-5a3 3 0 0 1 3-3z" fill="#5f8dc1" /></g>,
  dEditBox: <g>{DisBox}<path d="M20 2L9 17l-1 5 4-3L23 5z" fill="#585b5c" /></g>,
  dSelBox: <g><path d="M2 2h18v18H2z" fill="#45494a" stroke="#53575a" strokeDasharray="2 1" /><path d="M3 3l17 17M20 3L3 20" stroke="#35393c" /><path d="M10 10l12 5-5 2 5 5-2 1-5-5-3 3z" fill="#6b6e6c" /></g>,
  dBoxes: <g stroke="#43474a" strokeWidth="1" fill="none"><path d="M2 3h9v9H2zM2 3l9 9M11 3l-9 9M2 14h9v9H2zM2 14l9 9M11 14l-9 9M14 9l5-5 5 5-5 5zM14 20l5-5 5 5-5 4z" /></g>,
  dBoxV: <g fill="none" stroke="#45494c" strokeWidth="1.200"><path d="M2 3h20v18H2zM4 4l8 16 8-16" /></g>,
  labelA: (
    <g>
      <path d="M2 4h13" stroke="#5d90c7" strokeWidth="1.200" />
      <path d="M18 1l1 2 2 .3-1.500 1.500.4 2-1.900-1-1.900 1 .4-2L15 3.300l2-.3z" fill="#5f8dc1" />
      <text x="2" y="20" fontSize="17" fontWeight="700" fontFamily="Noto Sans" fill="#6fa1da">A</text>
      <Gold />
    </g>
  ),
  cursor: (
    <g>
      <path d="M3 3h17v17H3z" fill="none" stroke="#e8e8e8" strokeDasharray="2 2" />
      <path d="M7 3l13 12-6 .5 4 7-3 1.500-3.500-7.500L7 20z" fill="#fff" stroke="#222" strokeWidth=".6" />
    </g>
  ),
  poly: (
    <g stroke="#0c0c0c" strokeWidth="1.300">
      <path d="M4 12L7 3l10-1 -6 18z" fill="none" />
      <circle cx="4" cy="12" r="2.300" fill="#1f6fe0" stroke="none" /><circle cx="7" cy="3" r="2.300" fill="#1f6fe0" stroke="none" /><circle cx="17" cy="2" r="2.300" fill="#1f6fe0" stroke="none" /><circle cx="11" cy="20" r="2.300" fill="#1f6fe0" stroke="none" />
      <g stroke="none"><Plus /></g>
    </g>
  ),
  line: (
    <g stroke="#0c0c0c" strokeWidth="1.300">
      <path d="M6 2l10 1M6 2L3 12l6 8" fill="none" />
      <circle cx="6" cy="2" r="2.300" fill="#1f6fe0" stroke="none" /><circle cx="16" cy="3" r="2.300" fill="#1f6fe0" stroke="none" /><circle cx="3" cy="12" r="2.300" fill="#1f6fe0" stroke="none" /><circle cx="9" cy="20" r="2.300" fill="#1f6fe0" stroke="none" />
      <g stroke="none"><Plus /></g>
    </g>
  ),
  star: <g><path d="M10 1l3 7 7 1-5 5 1 7-6-3-7 3 2-7-5-5 7-1z" fill="#f6d56c" stroke="#c9a43e" strokeWidth=".5" /><Plus /></g>,
  textAdd: <g><text x="3" y="17" fontSize="16" fontWeight="700" fontFamily="Liberation Serif" fill="#f2f2f2">T</text><rect x="1" y="17" width="3" height="3" fill="#ddd" /><Plus /></g>,
  bubble: <g><path d="M2 2h20v15H10l-6 5 1-5H2z" fill="#e9eef2" stroke="#aab" strokeWidth=".5" /><text x="7" y="14" fontSize="13" fontWeight="700" fontFamily="Liberation Serif" fill="#333">T</text></g>,
  // small dock toolbar icons
  addRes: <g><path d="M3 2h15v16H3z" fill="#eee" /><circle cx="19" cy="20" r="3.500" fill="#5d9a5d" /></g>,
  filter: <g><path d="M2 2h20v3H2z" fill="#e8c533" /><path d="M3 6h18l-7 8v9l-4-3v-6z" fill="#6d9bd1" /></g>,
  collapse: <Expand up />,
  expand: <Expand />,
  info: <g><circle cx="12" cy="12" r="11" fill="#6f9dd0" /><text x="9" y="18" fontSize="15" fontWeight="700" fontStyle="italic" fontFamily="Liberation Serif" fill="#fff">i</text></g>,
  brush: <g><path d="M2 16l8-8 5 5-7 8z" fill="#d35b3f" /><path d="M5 13l4 5" stroke="#5c87c0" strokeWidth="3" /><path d="M13 10l9-8" stroke="#cda85e" strokeWidth="3" /></g>,
  grpAdd: <g><path d="M8 2h10v16H8z" fill="#eee" /><path d="M11 2v12M14 2v12" stroke="#444" /><path d="M3 8v14h13" stroke="#aaa" fill="none" /><circle cx="19" cy="20" r="3.500" fill="#5d9a5d" /></g>,
  group: <g><path d="M8 4h13v14H8z" fill="#eee" /><path d="M12 1v12M16 1v12" stroke="#555" /><path d="M3 9v13h14" stroke="#bbb" fill="none" /></g>,
  eye: <g><path d="M1 11c5-7 14-7 20 0-6 6-15 6-20 0z" fill="#dfe4e8" /><circle cx="11" cy="11" r="4.500" fill="#5f8dc1" /><circle cx="11" cy="11" r="2" fill="#222" /><path d="M19 21h5l-2.500 2.500z" fill="#bbb" /></g>,
  filterC: <g><path d="M2 2h20v3H2z" fill="#e8c533" /><path d="M3 6h18l-7 8v9l-4-3v-6z" fill="#6d9bd1" /><path d="M17 20h6l-3 3z" fill="#bbb" /></g>,
  dFilter: <g><path d="M5 3a4 4 0 1 1 8 0v6H5z" fill="none" stroke="#45494c" strokeWidth="2" /><path d="M7 12h13v10H7z" fill="#55585a" /></g>,
  remove: <g><path d="M3 2h15v16H3z" fill="#eee" /><rect x="14" y="15" width="9" height="7" rx="1" fill="#d63d3d" /><path d="M16 18.500h5" stroke="#fff" strokeWidth="1.500" /></g>,
  procGear: <g><circle cx="10" cy="8" r="6" fill="#d5232b" /><circle cx="10" cy="8" r="7.500" fill="none" stroke="#d5232b" strokeWidth="2" strokeDasharray="2 2" /><circle cx="18" cy="14" r="3" fill="#8c8c8c" /><circle cx="7" cy="19" r="2.500" fill="#5f8dc1" /><path d="M17 21h6l-3 3z" fill="#bbb" /></g>,
  pyCaret: <g>{Python}<path d="M18 21h6l-3 3z" fill="#bbb" /></g>,
  doc: <g><path d="M4 1h11l5 5v17H4z" fill="#eee" /><path d="M7 9h10M7 12h10M7 15h10M7 18h10" stroke="#777" /></g>,
  editYel: <g><path d="M2 3h16v13H2z" fill="#f5dc45" stroke="#b39a28" strokeWidth=".5" /><path d="M21 7L13 20l-4 3 1-5 8-12z" fill="#d8b24e" /></g>,
  wrench: <g><path d="M3 3c3-2 7-1 8 3l11 13-3 3L7 11C3 11 1 7 3 3z" fill="#e0c56e" stroke="#777" strokeWidth=".5" /><path d="M3 3c3-2 7-1 8 3L8 10C5 10 2 7 3 3z" fill="#e8e8e8" /></g>,
  qLogo: QLogo,
  clock2: <g><circle cx="12" cy="12" r="11" fill="#f0f0f0" /><path d="M12 5v7l5 3" stroke="#555" strokeWidth="1.500" fill="none" /></g>,
  dList: <g><rect x="2" y="3" width="20" height="18" fill="#55585a" /><rect x="5" y="6" width="14" height="4" fill="#3f4346" /><rect x="5" y="13" width="14" height="4" fill="#3f4346" /></g>,
  starExp: <g><Expand /><path d="M8 0l2.500 5 5 .8-3.600 3.600.9 5L8 12l-4.800 2.400.9-5L.5 5.800l5-.8z" fill="#f2cc30" stroke="#fff" strokeWidth=".5" /></g>,
  dPrint: <g fill="#55585a"><path d="M6 2h12v6H6z" /><path d="M2 8h20v10H2z" /><path d="M6 15h12v7H6z" /></g>,
  desel2: <g><path d="M2 2h13v13H2z" fill="#f2d945" /><path d="M7 7h13v13H7z" fill="#f2d945" stroke="#b8a02b" strokeWidth=".5" /><circle cx="18" cy="18" r="5.500" fill="#d7303a" /><path d="M15 21l6-6" stroke="#fff" /></g>,
  // browser tree
  fav: <path d="M12 1l3.400 7.400 8 .9-6 5.400 1.700 8L12 19l-7.100 3.700 1.700-8-6-5.400 8-.9z" fill="#f2d22e" stroke="#8a7420" strokeWidth=".5" />,
  projHome: <g><path d="M1 3h22v18H1z" fill="#b8d95a" /><path d="M9 10c4-4 10-3 12-1l-5 8z" fill="#2f8f2f" /></g>,
  home: <g><path d="M1 3h8l2 2h12v16H1z" fill="#efefef" /><path d="M6 14l6-5 6 5M8 13v5h8v-5" stroke="#111" fill="none" strokeWidth="1.400" /></g>,
  folder: <path d="M1 3h8l2 2h12v16H1z" fill="#efefef" />,
  gpkg2: <g><path d="M1 10l11-4 11 4v9l-11 4-11-4z" fill="#f0c93c" stroke="#8a7020" strokeWidth=".5" /><circle cx="12" cy="8" r="6.500" fill="#5f8dc1" /><path d="M8 7c3-2 4 1 6 0" stroke="#e4ecf5" fill="none" strokeWidth="1.500" /></g>,
  feather2: <path d="M1 23C5 12 13 3 23 1c0 5-1 8-5 10 0 3-3 6-8 6-3 0-5 2-9 6z" fill="#5f8dc1" stroke="#dfe8f1" strokeWidth=".5" />,
  pg: <path d="M4 2h6l2 1 2-1h6c3 2 3 7 1 10l-2 2v7l-3 1-1-4-3 1-3-1-1 4-3-1v-7l-3-3C1 8 1 4 4 2z" fill="#5f8dc1" stroke="#cfd8e2" strokeWidth=".5" />,
};

const Ico = ({ k, cls = "h-6 w-6" }: { k: string; cls?: string }) => (
  <svg viewBox="0 0 24 24" className={cls + " block shrink-0 overflow-visible"}>
    {ic[k]}
  </svg>
);

const ML: Record<number, string> = {
  1: "ml-[1px]", 5: "ml-[5px]", 6: "ml-[6px]", 7: "ml-[7px]", 8: "ml-[8px]", 9: "ml-[9px]",
  10: "ml-[10px]", 11: "ml-[11px]", 14: "ml-[14px]", 15: "ml-[15px]", 16: "ml-[16px]",
};

const Handle = ({ m }: { m: number }) => (
  <div className={ML[m] + " grid h-[24px] w-[3px] shrink-0 grid-cols-1 content-between"}>
    {[0, 1, 2, 3, 4, 5, 6].map((i) => (
      <span key={i} className="h-[2px] w-[3px] bg-[#5e6367]" />
    ))}
  </div>
);

// [icon, left margin]; h = handle, c = caret, | = separator, * = pressed
type Item = [string, number];
const Toolbar = ({ items, cls }: { items: Item[]; cls: string }) => (
  <div className={cls + " flex items-center border-b border-[#7a7d80] pl-[6px]"}>
    {items.map(([k, m], i) => {
      if (k === "h") return <Handle key={i} m={i === 0 ? 1 : m} />;
      if (k === "c")
        return <div key={i} className={ML[m] + " h-0 w-0 shrink-0 border-x-[4px] border-t-[4px] border-x-transparent border-t-[#7d8286]"} />;
      if (k === "|") return <div key={i} className={ML[m] + " h-[30px] w-px shrink-0 bg-[#3d4246]"} />;
      if (k[0] === "*")
        return (
          <div key={i} className={ML[m] + " shrink-0 rounded-[2px] bg-[#4a5055] shadow-[0_0_0_3px_#4a5055,0_0_0_4px_#6b7075]"}>
            <Ico k={k.slice(1)} />
          </div>
        );
      return (
        <div key={i} className={ML[m] + " shrink-0"}>
          <Ico k={k} />
        </div>
      );
    })}
  </div>
);

const T1: Item[] = [["h", 1], ["new", 7], ["open", 8], ["save", 9], ["layout", 9], ["layoutMgr", 9], ["style", 9], ["h", 15], ["*hand", 8], ["panSel", 8], ["zoomIn", 10], ["zoomOut", 9], ["fullExt", 9], ["zoomSel", 9], ["zoomLayer", 9], ["zoomNat", 9], ["zoomLast", 9], ["zoomNext", 9], ["mapView", 9], ["map3d", 9], ["bmNew", 10], ["bookmarks", 8], ["clock", 9], ["refresh", 9], ["h", 14], ["identify", 7], ["attr", 9], ["*gear", 10], ["sigma", 8], ["table", 10], ["c", 6], ["ruler", 7], ["c", 6], ["tip", 6], ["model", 10], ["c", 6]];
const T2: Item[] = [["h", 1], ["dsm", 8], ["gpkg", 7], ["dots", 10], ["feather", 8], ["chip", 11], ["grid", 9], ["|", 8], ["virtual", 6], ["|", 9], ["h", 11], ["pencils", 9], ["dPencil", 7], ["dSave", 9], ["dPoly", 10], ["dVertex", 14], ["c", 1], ["dEdit", 6], ["dTrash", 8], ["dCut", 10], ["dCopy", 9], ["dPaste", 10], ["undo", 8], ["redo", 9], ["h", 15], ["abc", 7], ["pie", 8], ["|", 10], ["abBlue", 6], ["abcRed", 9], ["|", 10], ["abPin", 6], ["abRot", 8], ["abMove", 9], ["abTurn", 9], ["abEdit", 9], ["h", 16], ["globe", 7], ["h", 15], ["python", 7], ["h", 15], ["help", 7], ["h", 14]];
const T3: Item[] = [["h", 1], ["selDis", 8], ["c", 6], ["selTab", 8], ["c", 5], ["deselect", 6], ["c", 7], ["selLoc", 5], ["h", 16], ["dEditBox", 7], ["dSelBox", 9], ["c", 6], ["dBoxes", 8], ["dBoxV", 9], ["c", 6], ["h", 11], ["labelA", 8], ["c", 7], ["cursor", 6], ["poly", 10], ["line", 9], ["star", 9], ["textAdd", 9], ["|", 8], ["bubble", 7], ["c", 6]];

// ---- docks -------------------------------------------------------------
const DockTitle = ({ title, cls = "pl-[3px]" }: { title: string; cls?: string }) => (
  <div className={cls + " flex h-[18px] shrink-0 items-center justify-between pr-[3px] text-[13px] text-[#d5d8da]"}>
    <span>{title}</span>
    <span className="flex gap-[3px]">
      <svg viewBox="0 0 10 10" className="h-[10px] w-[10px]" fill="none" stroke="#787c80">
        <path d="M3 .5h6.500V7H3zM.5 3H3M.5 3v6.500H7V7" />
      </svg>
      <svg viewBox="0 0 10 10" className="h-[10px] w-[10px]" fill="none" stroke="#787c80">
        <path d="M.5 .5h9v9h-9zM2 2l6 6M8 2L2 8" />
      </svg>
    </span>
  </div>
);

const Dots = ({ v }: { v?: boolean }) => (
  <div className={(v ? "h-[18px] w-[3px] flex-col" : "h-[3px] w-[18px]") + " flex justify-between"}>
    {[0, 1, 2, 3, 4, 5].map((i) => (
      <span key={i} className="h-[2px] w-[2px] bg-[#62676b]" />
    ))}
  </div>
);

const Arrow = ({ open }: { open?: boolean }) =>
  open ? (
    <span className="h-0 w-0 border-x-[4px] border-t-[5px] border-x-transparent border-t-[#9da1a5]" />
  ) : (
    <span className="h-0 w-0 border-y-[4px] border-l-[4px] border-y-transparent border-l-[#9da1a5]" />
  );

const Scroll = ({ handle }: { handle: string }) => (
  <div className="flex w-[13px] shrink-0 flex-col gap-px">
    <div className="flex h-[13px] items-center justify-center bg-[#4d5257]">
      <span className="h-0 w-0 border-x-[4px] border-b-[4px] border-x-transparent border-b-[#c6c9cc]" />
    </div>
    <div className={handle + " bg-[#52575c] border border-[#62676b]"} />
    <div className="flex-1 bg-[#3f4448]" />
    <div className="flex h-[13px] items-center justify-center bg-[#4d5257]">
      <span className="h-0 w-0 border-x-[4px] border-t-[4px] border-x-transparent border-t-[#c6c9cc]" />
    </div>
  </div>
);

const browserRows: [string, string, boolean][] = [
  ["Favorites", "fav", false],
  ["Spatial Bookmarks", "bookmarks", true],
  ["Project Home", "projHome", true],
  ["Home", "home", true],
  ["/", "folder", true],
  ["GeoPackage", "gpkg2", false],
  ["SpatiaLite", "feather2", false],
  ["PostGIS", "pg", true],
];

const BrowserRow = ({ label, k, arrow }: { label: string; k: string; arrow: boolean }) => (
  <div className="flex h-[20px] items-center text-[13px] text-[#d8dbdd]">
    <span className="flex w-[16px] justify-center">{arrow && <Arrow />}</span>
    <span className="ml-[3px] w-[18px]">
      <Ico k={k} cls="h-[16px] w-[16px]" />
    </span>
    <span className="ml-[4px]">{label}</span>
  </div>
);

const Check = () => (
  <svg viewBox="0 0 14 14" className="h-[14px] w-[14px]" fill="none" stroke="#f0f0f0" strokeWidth="1.500">
    <path d="M3.500 7.500L6 11l4.500-8" />
  </svg>
);

const Cb = ({ on }: { on?: boolean }) => (
  <span className={(on ? "bg-[#31363b]" : "bg-[#2a2e32]") + " block h-[14px] w-[14px] shrink-0 rounded-[1px] border border-[#363a3f]"}>
    {on && <Check />}
  </span>
);

type Sym =
  | { t: "group" }
  | { t: "trees" }
  | { t: "dot"; c: string }
  | { t: "line"; c: string }
  | { t: "box"; c: string };

const layers: { n: string; s: Sym; arrow?: boolean; active?: boolean }[] = [
  { n: "zad8", s: { t: "group" }, arrow: true, active: true },
  { n: "airports", s: { t: "dot", c: "#d8613c" } },
  { n: "zad5", s: { t: "group" }, arrow: true, active: true },
  { n: "popp", s: { t: "dot", c: "#e5b32d" } },
  { n: "storagep", s: { t: "dot", c: "#bdb295" } },
  { n: "majrivers", s: { t: "line", c: "#63815f" } },
  { n: "pipelines", s: { t: "line", c: "#97404a" } },
  { n: "railroads", s: { t: "line", c: "#71a165" } },
  { n: "Buffered", s: { t: "box", c: "#6fa06f" } },
  { n: "rivers", s: { t: "line", c: "#2020a8" } },
  { n: "trails", s: { t: "line", c: "#c87e22" } },
  { n: "builtups", s: { t: "box", c: "#a7755c" } },
  { n: "grassland", s: { t: "box", c: "#e86f8f" } },
  { n: "lakes", s: { t: "box", c: "#bfd04c" } },
  { n: "landice", s: { t: "box", c: "#975529" } },
  { n: "swamp", s: { t: "box", c: "#d9b435" } },
];
const layersEnd: { n: string; s: Sym; arrow?: boolean }[] = [
  { n: "trees", s: { t: "trees" }, arrow: true },
  { n: "tundra", s: { t: "box", c: "#285a0e" } },
  { n: "regions", s: { t: "box", c: "#8a5a9e" } },
  { n: "alaska", s: { t: "box", c: "#c48a8e" } },
];

const Swatch = ({ c }: { c: string }) => (
  <span className="block h-[16px] w-[16px] shrink-0 border border-[#5a5e5c]" style={{ background: c }} />
);

const SymView = ({ s }: { s: Sym }) => {
  if (s.t === "group") return <span className="flex w-[16px] shrink-0"><Ico k="group" cls="h-[14px] w-[14px]" /></span>;
  if (s.t === "trees")
    return (
      <span className="flex w-[16px] shrink-0">
        <svg viewBox="0 0 16 16" className="h-[16px] w-[16px]">
          <path d="M0 6c2-4 5-5 8-5s6 1 8 5c-2 1-4 1-5 0l-3 7-3-7C4 7 2 7 0 6z" fill="#e8e8e8" />
          <path d="M4 14L12 4" stroke="#e6c63a" strokeWidth="2.500" strokeDasharray="1.500 1" />
        </svg>
      </span>
    );
  if (s.t === "dot")
    return (
      <span className="flex w-[16px] shrink-0 justify-center">
        <span className="block h-[5px] w-[5px] rounded-full" style={{ background: s.c }} />
      </span>
    );
  if (s.t === "line") return <span className="mr-[-2px] block h-[2px] w-[14px] shrink-0" style={{ background: s.c }} />;
  return <Swatch c={s.c} />;
};

const LayerRow = ({ n, s, arrow, active }: { n: string; s: Sym; arrow?: boolean; active?: boolean }) => (
  <div className="flex h-[20px] items-center text-[13px]">
    <span className="flex w-[23px] shrink-0 justify-center pr-[4px]">{arrow && <Arrow />}</span>
    <Cb />
    <span className="ml-[6px] flex items-center">
      <SymView s={s} />
    </span>
    <span className={active ? "ml-[6px] text-[#d8dbdd]" : "ml-[6px] font-semibold italic text-[#808488]"}>{n}</span>
  </div>
);

const SubLayer = ({ n, c }: { n: string; c: string }) => (
  <div className="flex h-[20px] items-center pl-[43px] text-[13px]">
    <Cb on />
    <span className="ml-[6px]"><Swatch c={c} /></span>
    <span className="ml-[6px] font-bold text-[#e4e6e8]">{n}</span>
  </div>
);

const Tools = ({ items, cls }: { items: [string, string][]; cls: string }) => (
  <div className={cls + " flex h-[24px] shrink-0 items-center"}>
    {items.map(([k, c], i) =>
      k === "c" ? (
        <span key={i} className={c + " h-0 w-0 border-x-[4px] border-t-[4px] border-x-transparent border-t-[#6e7377]"} />
      ) : k[0] === "*" ? (
        <span key={i} className={c + " rounded-[2px] bg-[#4a5055] shadow-[0_0_0_3px_#4a5055,0_0_0_4px_#6b7075]"}>
          <Ico k={k.slice(1)} cls="h-[16px] w-[16px]" />
        </span>
      ) : (
        <span key={i} className={c}>
          <Ico k={k} cls="h-[16px] w-[16px]" />
        </span>
      ),
    )}
  </div>
);

const LeftDock = () => (
  <aside className="flex w-[288px] shrink-0">
    <div className="flex w-[281px] shrink-0 flex-col">
      <DockTitle title="Browser" />
      <Tools cls="mt-[4px] pl-[8px]" items={[["addRes", ""], ["refresh", "ml-[9px]"], ["filter", "ml-[9px]"], ["collapse", "ml-[9px]"], ["info", "ml-[9px]"]]} />
      <div className="mt-[4px] flex h-[163px] shrink-0 border border-[#25282c] bg-[#2a2e32] pr-px">
        <div className="min-w-0 flex-1 pt-px">
          {browserRows.map(([l, k, a]) => (
            <BrowserRow key={l} label={l} k={k} arrow={a} />
          ))}
        </div>
        <Scroll handle="h-[67px]" />
      </div>
      <div className="flex h-[7px] shrink-0 items-center justify-center pl-[2px]"><Dots /></div>
      <DockTitle title="Layers" />
      <Tools cls="mt-[4px] pl-[8px]" items={[["brush", ""], ["grpAdd", "ml-[9px]"], ["eye", "ml-[9px]"], ["filterC", "ml-[9px]"], ["dFilter", "ml-[13px]"], ["c", "ml-[2px]"], ["expand", "ml-[7px]"], ["collapse", "ml-[9px]"], ["remove", "ml-[8px]"]]} />
      <div className="mt-[4px] min-h-0 flex-1 border border-[#25282c] bg-[#2a2e32] pt-px">
        {layers.map((l) => (
          <LayerRow key={l.n} {...l} />
        ))}
        <div className="flex h-[20px] items-center bg-[#5b3557] text-[13px]">
          <span className="flex w-[23px] shrink-0 justify-center pr-[4px]"><Arrow open /></span>
          <Cb on />
          <span className="ml-[6px] flex w-[16px]"><Ico k="group" cls="h-[14px] w-[14px]" /></span>
          <span className="ml-[6px] text-[#e4e6e8]">zad2</span>
        </div>
        <SubLayer n="trees_mixed" c="#94532b" />
        <SubLayer n="trees_evergreen" c="#bfb498" />
        <SubLayer n="trees_deciduous" c="#e5b32e" />
        {layersEnd.map((l) => (
          <LayerRow key={l.n} {...l} />
        ))}
      </div>
    </div>
    <div className="flex flex-1 items-center justify-center"><Dots v /></div>
  </aside>
);

const RightDock = () => (
  <aside className="flex w-[263px] shrink-0">
    <div className="flex w-[8px] shrink-0 items-center justify-center"><Dots v /></div>
    <div className="flex min-w-0 flex-1 flex-col">
      <DockTitle title="Processing Toolbox" />
      <Tools cls="mt-[4px] pl-[7px]" items={[["procGear", ""], ["pyCaret", "ml-[9px]"], ["clock2", "ml-[9px]"], ["*doc", "ml-[9px]"], ["editYel", "ml-[16px]"], ["wrench", "ml-[15px]"]]} />
      <div className="mt-[4px] flex h-[25px] shrink-0 items-center rounded-t-[2px] border border-[#25282c] bg-[#2a2e32] pl-[6px] text-[13px] text-[#777c80]">
        <Search className="h-[14px] w-[14px] text-[#85898d]" strokeWidth={1.500} />
        <span className="ml-[7px]">Search...</span>
      </div>
      <div className="flex h-[72px] shrink-0 overflow-hidden border-x border-b border-[#25282c] bg-[#2a2e32] pr-px">
        <div className="min-w-0 flex-1 pl-[2px] pt-[3px]">
          {[["Recently used", "clock2"], ["Cartography", "qLogo"], ["Database", "qLogo"], ["File tools", "qLogo"]].map(([l, k]) => (
            <BrowserRow key={l} label={l} k={k} arrow />
          ))}
        </div>
        <Scroll handle="h-[26px]" />
      </div>
      <div className="flex h-[8px] shrink-0 items-center justify-center"><Dots /></div>
      <DockTitle title="Results Viewer" />
      <div className="mt-px h-[190px] shrink-0 border border-[#25282c] bg-[#2a2e32]" />
      <div className="flex h-[5px] shrink-0 items-center justify-center"><Dots /></div>
      <div className="h-[70px] shrink-0 border border-[#25282c] bg-[#2a2e32]" />
      <div className="flex h-[9px] shrink-0 items-center justify-center"><Dots /></div>
      <DockTitle title="Identify Results" />
      <Tools cls="mt-[3px] pl-[7px]" items={[["dList", ""], ["expand", "ml-[16px]"], ["collapse", "ml-[9px]"], ["starExp", "ml-[9px]"], ["desel2", "ml-[16px]"], ["dCopy", "ml-[16px]"], ["dPrint", "ml-[9px]"]]} />
      <div className="mt-[5px] flex min-h-0 flex-1 flex-col border border-[#25282c] bg-[#2a2e32]">
        <div className="flex h-[21px] shrink-0 items-center bg-[#50555a] text-[13px] text-[#d5d8da]">
          <span className="h-full w-[99px] border-r border-[#6e7377] pl-[2px] leading-[21px]">Feature</span>
          <span className="pl-[3px]">Value</span>
        </div>
      </div>
      <div className="mt-[3px] flex h-[24px] shrink-0 items-center text-[13px] text-[#d5d8da]">
        <span className="ml-[4px] w-[42px]">Mode</span>
        <div className="flex h-full w-[203px] items-center justify-between rounded-[2px] border border-[#62676b] bg-[#4b5055] pl-[3px] pr-[6px] text-[#e0e2e4]">
          Current Layer
          <span className="h-0 w-0 border-x-[4px] border-t-[4px] border-x-transparent border-t-[#c6c9cc]" />
        </div>
      </div>
      <div className="mb-[6px] mt-[8px] flex h-[24px] shrink-0 items-center text-[13px] text-[#62676b]">
        <span className="ml-[4px] w-[37px]">View</span>
        <div className="flex h-full w-[77px] items-center justify-between rounded-[2px] border border-[#54595d] bg-[#43484c] pl-[3px] pr-[6px]">
          Tree
          <span className="h-0 w-0 border-x-[4px] border-t-[4px] border-x-transparent border-t-[#6e7377]" />
        </div>
      </div>
    </div>
  </aside>
);

const Spin = () => (
  <span className="flex h-full w-[13px] flex-col items-center justify-around rounded-r-[2px] bg-[#50555a]">
    <span className="h-0 w-0 border-x-[3px] border-b-[4px] border-x-transparent border-b-[#a9adb0]" />
    <span className="h-0 w-0 border-x-[3px] border-t-[4px] border-x-transparent border-t-[#a9adb0]" />
  </span>
);

const Field = ({ cls, text, right }: { cls: string; text: string; right?: ReactNode }) => (
  <div className={cls + " flex h-[24px] shrink-0 items-center justify-between rounded-[2px] bg-[#2a2e32] pl-[5px] text-[#d5d8da]"}>
    <span>{text}</span>
    {right}
  </div>
);

const StatusBar = () => (
  <footer className="flex h-[33px] shrink-0 items-center pl-[4px] pr-[7px] text-[11px] text-[#d0d3d5]">
    <div className="flex h-[26px] w-[235px] shrink-0 items-center rounded-[2px] border border-[#282c30] bg-[#2a2e32] pl-[8px] text-[13px] text-[#7c8084]">
      <Search className="h-[14px] w-[14px] text-[#85898d]" strokeWidth={1.500} />
      <span className="ml-[7px]">Type to locate (Ctrl+K)</span>
    </div>
    <span className="ml-auto">Coordinate</span>
    <Field cls="ml-[5px] w-[102px]" text="7636323,8654940" />
    <svg viewBox="0 0 16 16" className="ml-[6px] h-[16px] w-[16px]">
      <path d="M3 2l5 6M7 1l3 7M12 2l-2 6" stroke="#ddd" strokeWidth="1.600" />
      <circle cx="9" cy="11" r="4" fill="#ddd" /><circle cx="9" cy="11" r="1.500" fill="#333" />
    </svg>
    <span className="ml-[12px]">Scale</span>
    <Field cls="ml-[3px] w-[87px]" text="1:11870572" right={<span className="flex h-full w-[20px] items-center justify-center rounded-r-[2px] bg-[#50555a]"><span className="h-0 w-0 border-x-[4px] border-t-[4px] border-x-transparent border-t-[#c6c9cc]" /></span>} />
    <svg viewBox="0 0 14 16" className="ml-[12px] h-[16px] w-[14px]">
      <path d="M4 8V5a3 3 0 0 1 6 0v3" fill="none" stroke="#b8bbbd" strokeWidth="1.800" />
      <rect x="2" y="8" width="10" height="7" rx="1" fill="#85898d" />
    </svg>
    <span className="ml-[8px]">Magnifier</span>
    <Field cls="ml-[5px] w-[88px]" text="100%" right={<Spin />} />
    <span className="ml-[9px]">Rotation</span>
    <Field cls="ml-[7px] w-[89px]" text="0.0 °" right={<Spin />} />
    <span className="ml-[8px] block h-[14px] w-[14px] rounded-[1px] bg-[#2a2e32]"><Check /></span>
    <span className="ml-[5px]">Render</span>
    <span className="ml-[17px] flex items-center gap-[4px]">
      <svg viewBox="0 0 14 14" className="h-[14px] w-[14px]">
        <circle cx="7" cy="7" r="6" fill="#d9dcdf" />
        <path d="M1 5h12M1 9h12M7 1v12" stroke="#666" />
      </svg>
      EPSG:2964
    </span>
    <svg viewBox="0 0 16 16" className="ml-[24px] h-[16px] w-[16px]">
      <path d="M8 1c4.500 0 7 2.500 7 6s-2.500 6-7 6l-3 2.500V12C2 11 1 9.500 1 7c0-3.500 2.500-6 7-6z" fill="#8a8e91" />
      <circle cx="5" cy="7" r="1" fill="#eee" /><circle cx="8" cy="7" r="1" fill="#eee" /><circle cx="11" cy="7" r="1" fill="#eee" />
    </svg>
  </footer>
);

const menus = ["Project", "Edit", "View", "Layer", "Settings", "Plugins", "Vector", "Raster", "Database", "Web", "Mesh", "Processing", "Help"];

const Tray = () => (
  <div className="ml-auto flex items-center gap-[8px] text-[#e3e5e6]">
    <svg viewBox="0 0 14 14" className="h-[14px] w-[14px]" fill="none" stroke="#e0e0e0"><path d="M3 10c1-1 1-3 1-5a3 3 0 0 1 6 0c0 2 0 4 1 5zM6 12h2M1 2l2 2M13 2l-2 2" /></svg>
    <svg viewBox="0 0 14 14" className="h-[14px] w-[14px]" fill="#f0f0f0"><path d="M2 13c-1-4 3-7 3-12 3 4 1 8-1 12zM7 12c0-3 3-5 4-9 1 4-1 8-3 9z" /></svg>
    <svg viewBox="0 0 14 14" className="h-[14px] w-[14px]" fill="none" stroke="#d0d0d0"><circle cx="7" cy="7" r="5.500" /><path d="M5.500 5v4M8.500 5v4" /></svg>
    <svg viewBox="0 0 14 14" className="h-[14px] w-[14px]" fill="none" stroke="#d0d0d0"><path d="M3 2h8v11H3zM5 1h4v2H5zM5 6h4M5 9h2" /></svg>
    <svg viewBox="0 0 14 14" className="h-[14px] w-[14px]" fill="none" stroke="#e0e0e0"><path d="M1 5h3l3-3v10L4 9H1z" fill="#e0e0e0" /><path d="M9 4c1 2 1 4 0 6M11 2c2 3 2 7 0 10" /></svg>
    <svg viewBox="0 0 14 14" className="h-[14px] w-[14px]"><path d="M4 2h6v11H4z" fill="#eee" /><path d="M5 1h4v1H5z" fill="#ddd" /><path d="M6 5h2v5H6z" fill="#39b58d" /></svg>
    <svg viewBox="0 0 14 14" className="h-[14px] w-[14px]" fill="none" stroke="#cfcfcf"><path d="M1 5c3-3 9-3 12 0M3 7.500c2-2 6-2 8 0M5 10c1-1 3-1 4 0" /><circle cx="7" cy="12" r="1" fill="#eee" /></svg>
    <span className="ml-[3px] h-0 w-0 border-x-[5px] border-t-[6px] border-x-transparent border-t-[#f0f0f0]" />
    <span className="ml-[2px] flex gap-[7px] whitespace-nowrap text-[14px]">
      <span>06.11.2021</span>
      <span>18:04</span>
    </span>
  </div>
);

const WinBtn = ({ children }: { children: ReactNode }) => (
  <svg viewBox="0 0 16 16" className="h-[17px] w-[17px]" fill="none" stroke="#e8e8e8">
    <circle cx="8" cy="8" r="7" />
    {children}
  </svg>
);

export default function App() {
  return (
    <div className="flex h-screen w-screen flex-col overflow-hidden bg-[#31363b] font-['Noto_Sans',sans-serif] text-[13px]">
      <header className="relative flex h-[32px] shrink-0 items-center bg-[#31363b] shadow-[0_1px_3px_#1c1f22]">
        <div className="ml-[5px] flex h-[20px] w-[126px] items-center justify-around rounded-[5px] bg-[#0c0d0e] px-[16px]">
          <svg viewBox="0 0 12 12" className="h-[13px] w-[13px]" fill="#ddd">
            {[1, 5, 9].map((y) => [1, 5, 9].map((x) => <rect key={x * 20 + y} x={x} y={y} width="2" height="2" />))}
          </svg>
          <svg viewBox="0 0 12 12" className="h-[12px] w-[12px]" fill="none" stroke="#ccc"><path d="M2 1h8v8c0 1-1 2-2 2H2z" /></svg>
          <svg viewBox="0 0 12 12" className="h-[12px] w-[12px]" fill="none" stroke="#ccc"><path d="M0 7h5c1 0 1-4 2-4h5M0 10h5M7 7h5" /></svg>
        </div>
        <nav className="ml-[12px] flex gap-[12.800px] text-[#d8dbdd]">
          {menus.map((m) => (
            <span key={m}>{m}</span>
          ))}
        </nav>
        <Tray />
      </header>
      <div className="flex h-[34px] shrink-0 items-center border-b border-[#7a7d80] bg-[#31363b] pl-[7px] pr-[9px]">
        <Ico k="qLogo" cls="h-[22px] w-[22px]" />
        <svg viewBox="0 0 16 16" className="ml-[4px] h-[17px] w-[17px]" fill="#ececec">
          <circle cx="8" cy="8" r="7" fill="none" stroke="#ececec" />
          <circle cx="5.500" cy="5.500" r="1.500" /><circle cx="10.500" cy="5.500" r="1.500" /><circle cx="5.500" cy="10.500" r="1.500" /><circle cx="10.500" cy="10.500" r="1.500" />
        </svg>
        <div className="flex-1 text-center text-[#d8dbdd]">*lab4 — QGIS</div>
        <div className="flex gap-[9px]">
          <WinBtn><circle cx="8" cy="8" r="2" fill="#e8e8e8" stroke="none" /></WinBtn>
          <WinBtn><circle cx="8" cy="8" r="3" strokeWidth="1.500" /></WinBtn>
          <WinBtn><path d="M5 5l6 6M11 5l-6 6" strokeWidth="1.500" /></WinBtn>
        </div>
      </div>
      <Toolbar items={T1} cls="h-[39px] shrink-0" />
      <Toolbar items={T2} cls="h-[39px] shrink-0" />
      <Toolbar items={T3} cls="h-[38px] shrink-0 !border-[#1f2225]" />
      <main className="mt-[2px] flex min-h-0 flex-1">
        <LeftDock />
        <div className="min-w-0 flex-1 bg-white">
          <MapDrawing />
        </div>
        <RightDock />
      </main>
      <StatusBar />
    </div>
  );
}
